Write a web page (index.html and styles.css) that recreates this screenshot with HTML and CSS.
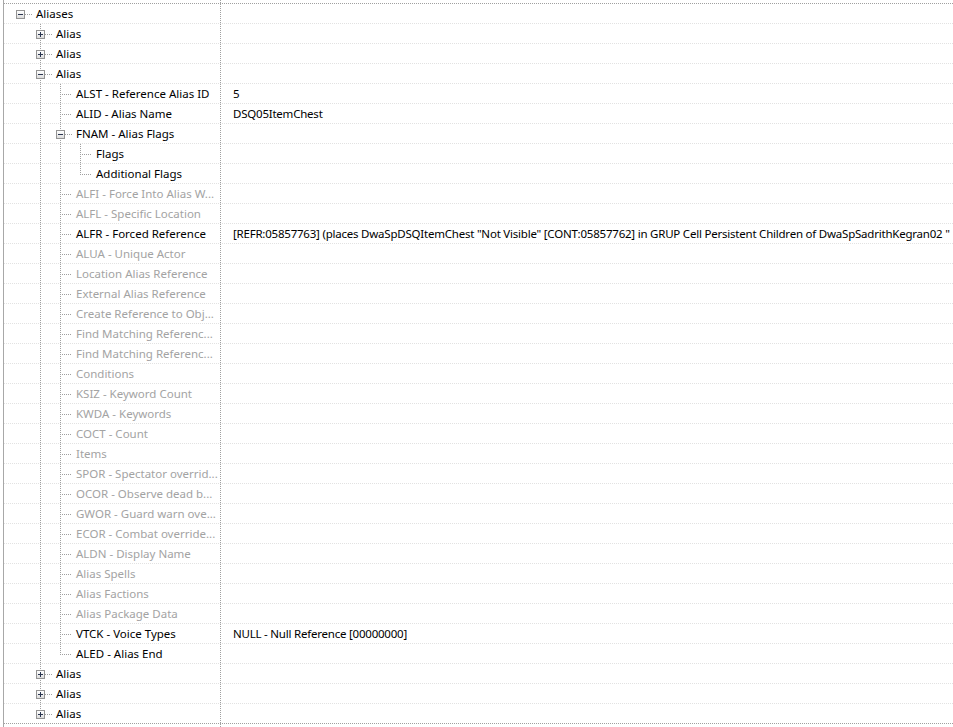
FILE: index.html
```html
<!DOCTYPE html>
<html lang="en">
<head>
  <meta charset="UTF-8" />
  <title>Record View - Aliases</title>
  <link rel="stylesheet" href="styles.css">
</head>
<body>
  <div class="view">
    <div class="rows">

      <div class="row">
        <div class="name"><span class="g h"><span class="box minus"></span></span><span class="label">Aliases</span></div>
        <div class="value"></div>
      </div>
      <div class="row">
        <div class="name"><span class="g"></span><span class="g v h"><span class="box plus"></span></span><span class="label">Alias</span></div>
        <div class="value"></div>
      </div>
      <div class="row">
        <div class="name"><span class="g"></span><span class="g v h"><span class="box plus"></span></span><span class="label">Alias</span></div>
        <div class="value"></div>
      </div>
      <div class="row">
        <div class="name"><span class="g"></span><span class="g v h"><span class="box minus"></span></span><span class="label">Alias</span></div>
        <div class="value"></div>
      </div>

      <!-- fields of the open alias -->
      <div class="row">
        <div class="name"><span class="g"></span><span class="g v"></span><span class="g v h"></span><span class="label">ALST - Reference Alias ID</span></div>
        <div class="value">5</div>
      </div>
      <div class="row">
        <div class="name"><span class="g"></span><span class="g v"></span><span class="g v h"></span><span class="label">ALID - Alias Name</span></div>
        <div class="value">DSQ05ItemChest</div>
      </div>
      <div class="row">
        <div class="name"><span class="g"></span><span class="g v"></span><span class="g v h"><span class="box minus"></span></span><span class="label">FNAM - Alias Flags</span></div>
        <div class="value"></div>
      </div>
      <div class="row">
        <div class="name"><span class="g"></span><span class="g v"></span><span class="g v"></span><span class="g v h"></span><span class="label">Flags</span></div>
        <div class="value"></div>
      </div>
      <div class="row">
        <div class="name"><span class="g"></span><span class="g v"></span><span class="g v"></span><span class="g end h"></span><span class="label">Additional Flags</span></div>
        <div class="value"></div>
      </div>
      <div class="row off">
        <div class="name"><span class="g"></span><span class="g v"></span><span class="g v h"></span><span class="label">ALFI - Force Into Alias W...</span></div>
        <div class="value"></div>
      </div>
      <div class="row off">
        <div class="name"><span class="g"></span><span class="g v"></span><span class="g v h"></span><span class="label">ALFL - Specific Location</span></div>
        <div class="value"></div>
      </div>
      <div class="row">
        <div class="name"><span class="g"></span><span class="g v"></span><span class="g v h"></span><span class="label">ALFR - Forced Reference</span></div>
        <div class="value">[REFR:05857763] (places DwaSpDSQItemChest "Not Visible" [CONT:05857762] in GRUP Cell Persistent Children of DwaSpSadrithKegran02 "</div>
      </div>
      <div class="row off">
        <div class="name"><span class="g"></span><span class="g v"></span><span class="g v h"></span><span class="label">ALUA - Unique Actor</span></div>
        <div class="value"></div>
      </div>
      <div class="row off">
        <div class="name"><span class="g"></span><span class="g v"></span><span class="g v h"></span><span class="label">Location Alias Reference</span></div>
        <div class="value"></div>
      </div>
      <div class="row off">
        <div class="name"><span class="g"></span><span class="g v"></span><span class="g v h"></span><span class="label">External Alias Reference</span></div>
        <div class="value"></div>
      </div>
      <div class="row off">
        <div class="name"><span class="g"></span><span class="g v"></span><span class="g v h"></span><span class="label">Create Reference to Obj...</span></div>
        <div class="value"></div>
      </div>
      <div class="row off">
        <div class="name"><span class="g"></span><span class="g v"></span><span class="g v h"></span><span class="label">Find Matching Referenc...</span></div>
        <div class="value"></div>
      </div>
      <div class="row off">
        <div class="name"><span class="g"></span><span class="g v"></span><span class="g v h"></span><span class="label">Find Matching Referenc...</span></div>
        <div class="value"></div>
      </div>
      <div class="row off">
        <div class="name"><span class="g"></span><span class="g v"></span><span class="g v h"></span><span class="label">Conditions</span></div>
        <div class="value"></div>
      </div>
      <div class="row off">
        <div class="name"><span class="g"></span><span class="g v"></span><span class="g v h"></span><span class="label">KSIZ - Keyword Count</span></div>
        <div class="value"></div>
      </div>
      <div class="row off">
        <div class="name"><span class="g"></span><span class="g v"></span><span class="g v h"></span><span class="label">KWDA - Keywords</span></div>
        <div class="value"></div>
      </div>
      <div class="row off">
        <div class="name"><span class="g"></span><span class="g v"></span><span class="g v h"></span><span class="label">COCT - Count</span></div>
        <div class="value"></div>
      </div>
      <div class="row off">
        <div class="name"><span class="g"></span><span class="g v"></span><span class="g v h"></span><span class="label">Items</span></div>
        <div class="value"></div>
      </div>
      <div class="row off">
        <div class="name"><span class="g"></span><span class="g v"></span><span class="g v h"></span><span class="label">SPOR - Spectator overrid...</span></div>
        <div class="value"></div>
      </div>
      <div class="row off">
        <div class="name"><span class="g"></span><span class="g v"></span><span class="g v h"></span><span class="label">OCOR - Observe dead b...</span></div>
        <div class="value"></div>
      </div>
      <div class="row off">
        <div class="name"><span class="g"></span><span class="g v"></span><span class="g v h"></span><span class="label">GWOR - Guard warn ove...</span></div>
        <div class="value"></div>
      </div>
      <div class="row off">
        <div class="name"><span class="g"></span><span class="g v"></span><span class="g v h"></span><span class="label">ECOR - Combat override...</span></div>
        <div class="value"></div>
      </div>
      <div class="row off">
        <div class="name"><span class="g"></span><span class="g v"></span><span class="g v h"></span><span class="label">ALDN - Display Name</span></div>
        <div class="value"></div>
      </div>
      <div class="row off">
        <div class="name"><span class="g"></span><span class="g v"></span><span class="g v h"></span><span class="label">Alias Spells</span></div>
        <div class="value"></div>
      </div>
      <div class="row off">
        <div class="name"><span class="g"></span><span class="g v"></span><span class="g v h"></span><span class="label">Alias Factions</span></div>
        <div class="value"></div>
      </div>
      <div class="row off">
        <div class="name"><span class="g"></span><span class="g v"></span><span class="g v h"></span><span class="label">Alias Package Data</span></div>
        <div class="value"></div>
      </div>
      <div class="row">
        <div class="name"><span class="g"></span><span class="g v"></span><span class="g v h"></span><span class="label">VTCK - Voice Types</span></div>
        <div class="value">NULL - Null Reference [00000000]</div>
      </div>
      <div class="row">
        <div class="name"><span class="g"></span><span class="g v"></span><span class="g end h"></span><span class="label">ALED - Alias End</span></div>
        <div class="value"></div>
      </div>

      <div class="row">
        <div class="name"><span class="g"></span><span class="g v h"><span class="box plus"></span></span><span class="label">Alias</span></div>
        <div class="value"></div>
      </div>
      <div class="row">
        <div class="name"><span class="g"></span><span class="g v h"><span class="box plus"></span></span><span class="label">Alias</span></div>
        <div class="value"></div>
      </div>
      <div class="row">
        <div class="name"><span class="g"></span><span class="g end h"><span class="box plus"></span></span><span class="label">Alias</span></div>
        <div class="value"></div>
      </div>

    </div>
  </div>
</body>
</html>
```

FILE: styles.css
```css
body {
  margin: 0;
  background: #fff;
  font-family: "Noto Sans", "Liberation Sans", sans-serif;
  font-size: 11.5px;
  color: #000;
  overflow: hidden;
}

/* outer frame; the dotted column divider runs the full height */
.view {
  margin-left: 3px;
  height: 100vh;
  border-left: 1px solid #a8a8a8;
  background: repeating-linear-gradient(to bottom, #a0a0a0 0 1px, transparent 1px 2px) 216px 0 / 1px 100% no-repeat;
}
.rows {
  padding-top: 3px;
}
.rows::before {
  content: "";
  display: block;
  height: 1px;
  background: repeating-linear-gradient(to right, #a0a0a0 0 1px, transparent 1px 2px);
}

.row {
  display: flex;
  height: 20px;
  box-sizing: border-box;
  line-height: 19px;
  border-bottom: 1px dotted #e2e2e2;
}
.row:last-child {
  border-bottom-color: #a0a0a0;
}
.row.off .label {
  color: #a3a3a3;
}

.name {
  display: flex;
  width: 216px;
  flex: none;
  padding-left: 6px;
  box-sizing: border-box;
}
.label {
  flex: 1;
  min-width: 0;
  padding-left: 4px;
  white-space: nowrap;
  overflow: hidden;
}
.value {
  flex: 1;
  min-width: 0;
  padding-left: 13px;
  white-space: nowrap;
  overflow: hidden;
  letter-spacing: -0.22px;
}

/* tree guide cells: dotted lines drawn as backgrounds */
.g {
  display: block;
  flex: none;
  width: 20px;
  height: 20px;
  margin-bottom: -1px;
}
.g.h {
  width: 22px;
}
.g.v {
  background: repeating-linear-gradient(to bottom, #a0a0a0 0 1px, transparent 1px 2px) 10px 0 / 1px 100% no-repeat;
}
.g.end {
  background: repeating-linear-gradient(to bottom, #a0a0a0 0 1px, transparent 1px 2px) 10px 0 / 1px 10px no-repeat;
}
.g.h::after {
  content: "";
  display: block;
  margin: 10px 0 0 10px;
  width: 12px;
  height: 1px;
  background: repeating-linear-gradient(to right, #a0a0a0 0 1px, transparent 1px 2px);
}

/* expand / collapse boxes */
.box {
  display: block;
  width: 9px;
  height: 9px;
  margin: 6px 0 0 6px;
  box-sizing: border-box;
  border: 1px solid #939393;
  position: relative;
  z-index: 1;
}
.box.minus {
  background:
    linear-gradient(#2a3550, #2a3550) center / 5px 1px no-repeat,
    linear-gradient(#fff, #dcdcdc);
}
.box.plus {
  background:
    linear-gradient(#2a3550, #2a3550) center / 5px 1px no-repeat,
    linear-gradient(#2a3550, #2a3550) center / 1px 5px no-repeat,
    linear-gradient(#fff, #dcdcdc);
}
.g.h:has(.box)::after {
  margin: -5px 0 0 15px;
  width: 7px;
}
```
